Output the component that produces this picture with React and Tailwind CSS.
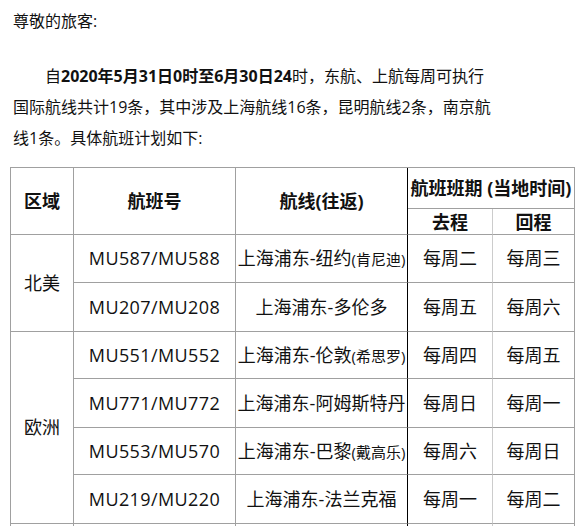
import React from "react";

const rows = [
  { no: "MU587/MU588", city: "纽约", port: "(肯尼迪)", go: "每周二", back: "每周三", h: "h-[48px]" },
  { no: "MU207/MU208", city: "多伦多", port: "", go: "每周五", back: "每周六", h: "h-[49px]" },
  { no: "MU551/MU552", city: "伦敦", port: "(希思罗)", go: "每周四", back: "每周五", h: "h-[47px]" },
  { no: "MU771/MU772", city: "阿姆斯特丹", port: "", go: "每周日", back: "每周一", h: "h-[49px]" },
  { no: "MU553/MU570", city: "巴黎", port: "(戴高乐)", go: "每周六", back: "每周日", h: "h-[47px]" },
  { no: "MU219/MU220", city: "法兰克福", port: "", go: "每周一", back: "每周二", h: "h-[49px]" },
];

const cell = "border-r border-b border-[#a0a0a0] p-0 text-center align-middle";

export default function App() {
  return (
    <div
      className="w-[586px] h-[526px] overflow-hidden bg-white text-[#111] pl-[10px] pt-[6px]"
      style={{ fontFamily: '"Open Sans", "Noto Sans CJK SC", sans-serif' }}
    >
      {/* Greeting */}
      <p className="pl-[3px] text-[16px] leading-[31px] mb-[24px]">尊敬的旅客:</p>

      {/* Intro paragraph */}
      <p className="pl-[3px] w-[483px] text-[16px] leading-[31px] indent-[32px]">
        自<b>2020年5月31日0时至6月30日24</b>时，东航、上航每周可执行国际航线共计19条，其中涉及上海航线16条，昆明航线2条，南京航线1条。具体航班计划如下:
      </p>

      {/* Flight table */}
      <table className="mt-[13px] w-[565px] table-fixed border-separate border-spacing-0 border-l border-t border-[#a0a0a0] text-[18px]">
        <colgroup>
          <col className="w-[63px]" />
          <col className="w-[162px]" />
          <col className="w-[172px]" />
          <col className="w-[85px]" />
          <col className="w-[82px]" />
        </colgroup>
        <thead>
          <tr className="h-[41px]">
            <th rowSpan={2} className={cell + " font-bold"}>区域</th>
            <th rowSpan={2} className={cell + " font-bold"}>航班号</th>
            <th rowSpan={2} className={cell + " font-bold !border-r-black"}>航线(往返)</th>
            <th colSpan={2} className={cell + " font-bold whitespace-nowrap"}>
              航班班期 (当地时间)
            </th>
          </tr>
          <tr className="h-[26px]">
            <th className={cell + " font-bold leading-none !border-r-[#cccccc]"}>去程</th>
            <th className={cell + " font-bold leading-none"}>回程</th>
          </tr>
        </thead>
        <tbody>
          {rows.map((r, i) => (
            <tr key={r.no} className={r.h}>
              {i === 0 && <td rowSpan={2} className={cell}>北美</td>}
              {i === 2 && <td rowSpan={4} className={cell}>欧洲</td>}
              <td className={cell + " tracking-[0.4px]"}>{r.no}</td>
              <td className={cell + " !border-r-black overflow-hidden whitespace-nowrap"}>
                上海浦东-{r.city}
                {r.port && <span className="text-[15px]">{r.port}</span>}
              </td>
              <td className={cell + " !border-r-[#cccccc]"}>{r.go}</td>
              <td className={cell}>{r.back}</td>
            </tr>
          ))}
          <tr className="h-[48px]">
            <td className={cell}></td>
            <td className={cell}></td>
            <td className={cell + " !border-r-black"}></td>
            <td className={cell + " !border-r-[#cccccc]"}></td>
            <td className={cell}></td>
          </tr>
        </tbody>
      </table>
    </div>
  );
}
